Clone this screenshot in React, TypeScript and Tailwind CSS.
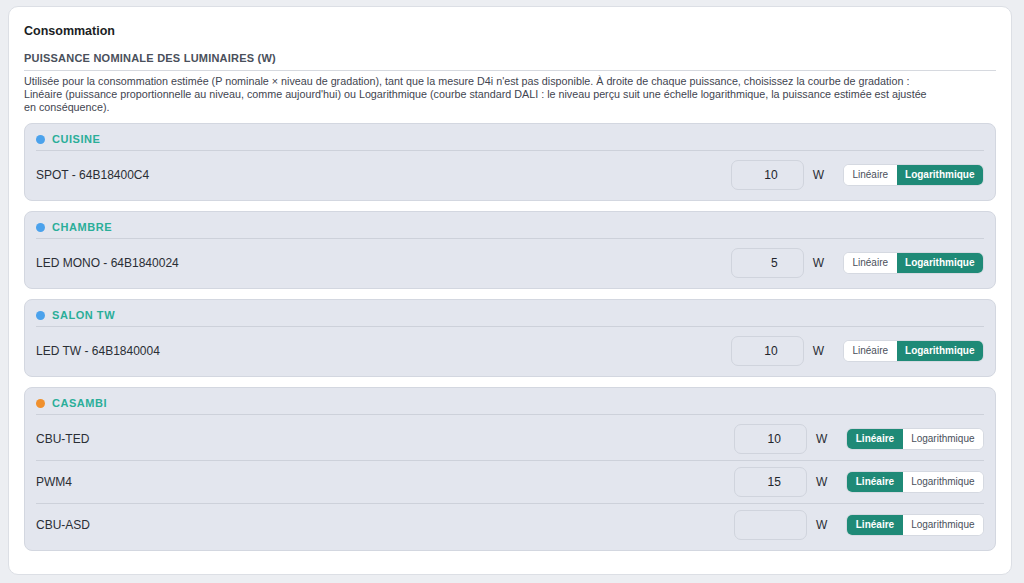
import { useState } from 'react'

type Curve = 'lin' | 'log'

interface Luminaire {
  id: string
  name: string
  power: string
  curve: Curve
}

interface Group {
  id: string
  label: string
  dot: string
  items: Luminaire[]
}

const groups: Group[] = [
  {
    id: 'cuisine',
    label: 'Cuisine',
    dot: 'bg-[#4ba2ec]',
    items: [{ id: 'spot', name: 'SPOT - 64B18400C4', power: '10', curve: 'log' }],
  },
  {
    id: 'chambre',
    label: 'Chambre',
    dot: 'bg-[#4ba2ec]',
    items: [{ id: 'mono', name: 'LED MONO - 64B1840024', power: '5', curve: 'log' }],
  },
  {
    id: 'salon',
    label: 'Salon TW',
    dot: 'bg-[#4ba2ec]',
    items: [{ id: 'tw', name: 'LED TW - 64B1840004', power: '10', curve: 'log' }],
  },
  {
    id: 'casambi',
    label: 'Casambi',
    dot: 'bg-[#f0902d]',
    items: [
      { id: 'ted', name: 'CBU-TED', power: '10', curve: 'lin' },
      { id: 'pwm4', name: 'PWM4', power: '15', curve: 'lin' },
      { id: 'asd', name: 'CBU-ASD', power: '', curve: 'lin' },
    ],
  },
]

function CurveToggle({ value, onChange }: { value: Curve; onChange: (v: Curve) => void }) {
  const seg = (active: boolean) =>
    active
      ? 'px-[8.5px] py-[4px] bg-[#1f8a77] text-white font-bold'
      : 'px-[8.5px] py-[4px] bg-white text-[#4a505b]'
  return (
    <div className="flex overflow-hidden rounded-[6px] border border-[#d5d9e1] bg-white text-[10px] leading-[12px]">
      <button type="button" className={seg(value === 'lin')} onClick={() => onChange('lin')}>
        Linéaire
      </button>
      <button type="button" className={seg(value === 'log')} onClick={() => onChange('log')}>
        Logarithmique
      </button>
    </div>
  )
}

function LuminaireRow({ item }: { item: Luminaire }) {
  const [power, setPower] = useState(item.power)
  const [curve, setCurve] = useState<Curve>(item.curve)

  return (
    <div className="flex items-center py-1.5 border-t border-[#cdd1da] first:border-t-0">
      <span className="flex-1 text-[12px] text-[#2a2e35]">{item.name}</span>
      <input
        value={power}
        onChange={(e) => setPower(e.target.value)}
        className="w-[73px] h-[30px] rounded-[7px] border border-[#d0d4dd] bg-transparent pr-[25px] text-right text-[12px] text-[#22252b] outline-none"
      />
      <span className="ml-[9px] text-[12px] text-[#2a2e35]">W</span>
      <div className="ml-[19px]">
        <CurveToggle value={curve} onChange={setCurve} />
      </div>
    </div>
  )
}

function GroupCard({ group }: { group: Group }) {
  return (
    <div className="rounded-[8px] border border-[#d3d7e0] bg-[#e3e6ee] px-[11px] pb-1">
      <div className="flex items-center gap-[7px] border-b border-[#cdd1da] pt-[8px] pb-[4px]">
        <span className={`h-[9px] w-[9px] rounded-full ${group.dot}`} />
        <span className="text-[11px] leading-[14px] font-bold uppercase tracking-[0.05em] text-[#2aae99]">
          {group.label}
        </span>
      </div>
      <div className="pt-[3px]">
        {group.items.map((item) => (
          <LuminaireRow key={item.id} item={item} />
        ))}
      </div>
    </div>
  )
}

export default function App() {
  return (
    <div className="min-h-[583px] bg-[#eceef2] pt-[6px] pl-2 font-['Liberation_Sans',Arial,sans-serif]">
      <div className="w-[1004px] rounded-[10px] border border-[#dcdfe5] bg-white px-[15px] pt-[15px] pb-[23px]">
        <h2 className="text-[12.5px] leading-[18px] font-bold text-[#1b1e24]">Consommation</h2>

        <h3 className="mt-[11px] border-b border-[#d6d9df] pb-[5px] text-[11px] leading-[14px] font-bold uppercase tracking-[0.02em] text-[#4a505b]">
          Puissance nominale des luminaires (W)
        </h3>
        <p className="mt-[4px] text-[10.75px] leading-[13px] text-[#3f4550]">
          Utilisée pour la consommation estimée (P nominale × niveau de gradation), tant que la mesure D4i
          n'est pas disponible. À droite de chaque puissance, choisissez la courbe de gradation&nbsp;:
          <br />
          Linéaire (puissance proportionnelle au niveau, comme aujourd'hui) ou Logarithmique (courbe standard
          DALI&nbsp;: le niveau perçu suit une échelle logarithmique, la puissance estimée est ajustée
          <br />
          en conséquence).
        </p>

        <div className="mt-[9px] flex flex-col gap-[10px]">
          {groups.map((g) => (
            <GroupCard key={g.id} group={g} />
          ))}
        </div>
      </div>
    </div>
  )
}
